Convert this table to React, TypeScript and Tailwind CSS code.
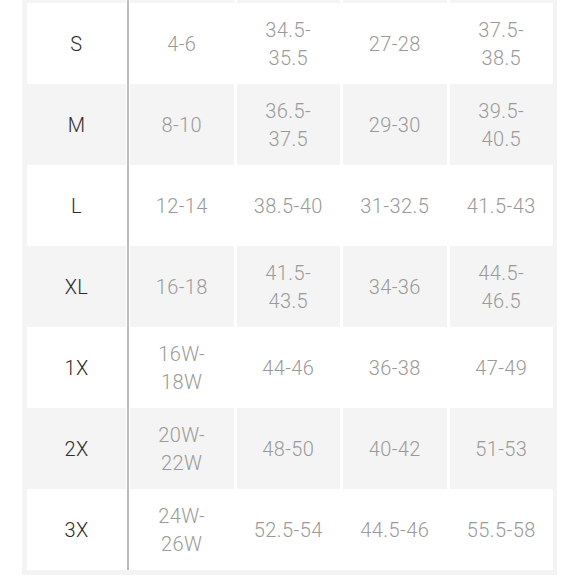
const rows: { size: string; cells: string[][] }[] = [
  { size: "S", cells: [["4-6"], ["34.5-", "35.5"], ["27-28"], ["37.5-", "38.5"]] },
  { size: "M", cells: [["8-10"], ["36.5-", "37.5"], ["29-30"], ["39.5-", "40.5"]] },
  { size: "L", cells: [["12-14"], ["38.5-40"], ["31-32.5"], ["41.5-43"]] },
  { size: "XL", cells: [["16-18"], ["41.5-", "43.5"], ["34-36"], ["44.5-", "46.5"]] },
  { size: "1X", cells: [["16W-", "18W"], ["44-46"], ["36-38"], ["47-49"]] },
  { size: "2X", cells: [["20W-", "22W"], ["48-50"], ["40-42"], ["51-53"]] },
  { size: "3X", cells: [["24W-", "26W"], ["52.5-54"], ["44.5-46"], ["55.5-58"]] },
];

const Row = ({ size, cells, shaded, h }: { size: string; cells: string[][]; shaded: boolean; h: string }) => {
  const bg = shaded ? "bg-[#f4f4f4]" : "bg-white";
  return (
    <div className={`flex ${h}`}>
      <div className={`w-[99px] ${bg} flex items-center justify-center text-[#2e2e2e]`}>{size}</div>
      <div className="w-[4px] flex justify-center bg-white">
        <div className="w-[2px] bg-[#bdbdbd]" />
      </div>
      <div className="flex-1 flex gap-[3px] bg-white">
        {cells.map((lines, i) => (
          <div key={i} className={`flex-1 ${bg} flex flex-col items-center justify-center text-[#9a9a9a] leading-[28px]`}>
            {lines.map((l, j) => (
              <span key={j}>{l}</span>
            ))}
          </div>
        ))}
      </div>
    </div>
  );
};

export default function App() {
  return (
    <div className="w-[580px] h-[580px] bg-white overflow-hidden font-['Roboto','Liberation_Sans',sans-serif] font-light text-[20px] tracking-[0.4px]">
      <div className="ml-[22px] w-[535px] bg-[#f4f4f4] pl-[5px] pr-[4px] pb-[5px]">
        <Row size="" cells={[[""], [""], [""], [""]]} shaded h="h-[3px]" />
        {rows.map((r, i) => (
          <Row key={r.size} size={r.size} cells={r.cells} shaded={i % 2 === 1} h="h-[81px]" />
        ))}
      </div>
    </div>
  );
}
